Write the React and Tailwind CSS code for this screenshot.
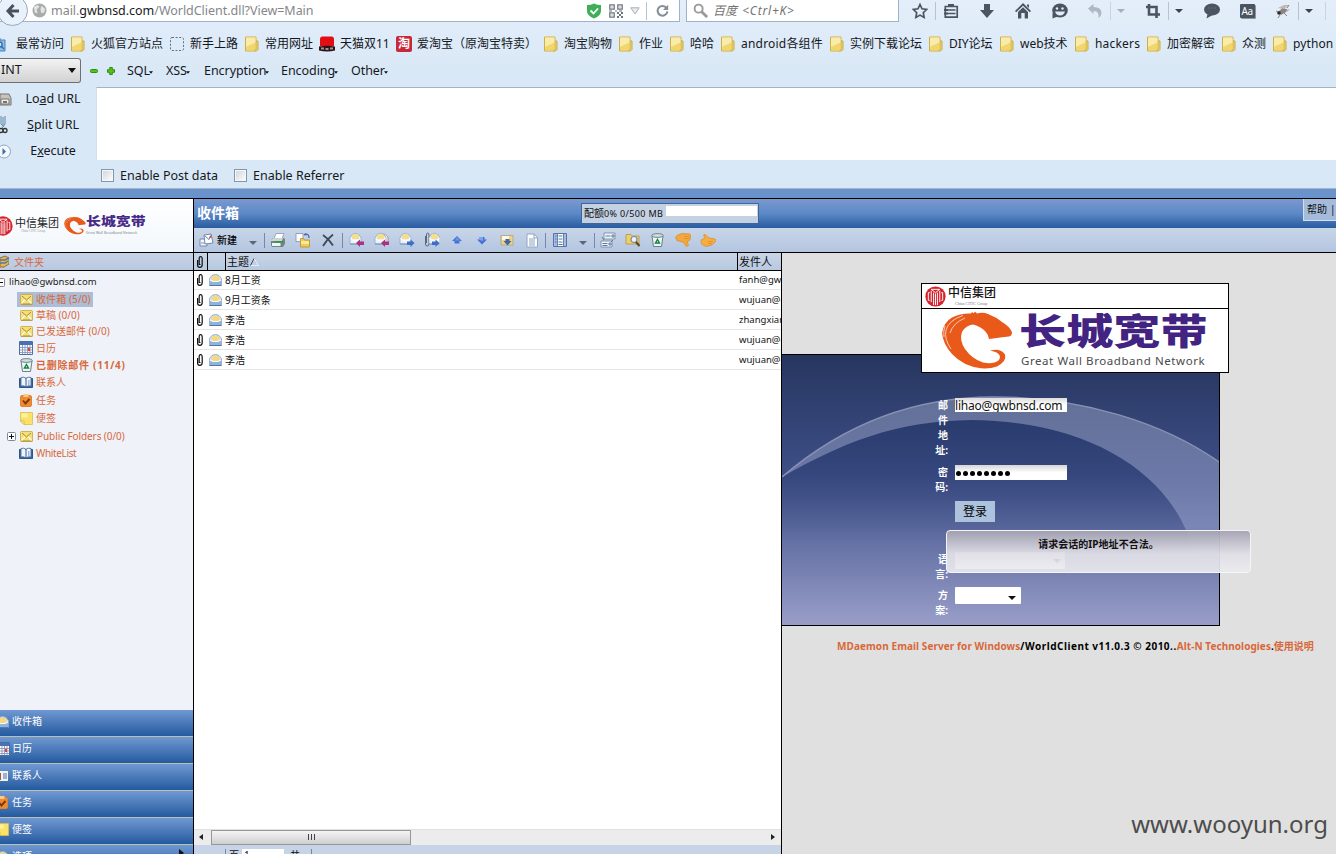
import React from "react";

const ui = "font-['Noto_Sans','Noto_Sans_CJK_SC',sans-serif]";

const Svg = ({ w = 16, h = 16, vb = "0 0 16 16", children, className = "" }) => (
  <svg width={w} height={h} viewBox={vb} fill="none" className={"block shrink-0 " + className}>
    {children}
  </svg>
);

/* ---------- browser icons ---------- */
const Folder = () => (
  <Svg w={14} h={16} vb="0 0 14 16">
    <path d="M10 5h3v8.500l-1.500 1.500H9z" fill="#efd572" stroke="#c9a947" />
    <path d="M.5 1h10.500v12l-1 2H.5z" fill="#f3df85" stroke="#cfae4c" />
    <path d="M1 1.500h9.500v5L1 11z" fill="#f9ecaa" />
    <path d="M1 11l9.500-4.500v6.500l-1 1.500H1z" fill="#f0d66c" />
  </Svg>
);
const Dashed = () => (
  <Svg w={14} h={14} vb="0 0 14 14">
    <rect x=".5" y=".5" width="13" height="13" rx="1.500" stroke="#5f7082" strokeDasharray="2 1.600" />
  </Svg>
);
const Tmall = () => (
  <Svg>
    <path d="M1 3q0-2.500 2-2.500h10q2 0 2 2.500v7H1z" fill="#e30d14" />
    <path d="M0 10.500q8-1.500 16 0v4q-8 2-16 0z" fill="#2a1414" />
    <path d="M2 11.500h3v2H2zM6.500 12h3v2h-3zM11 11.500h3v2h-3z" fill="#a39292" />
  </Svg>
);
const Visited = () => (
  <Svg w={10} h={15} vb="0 0 10 15">
    <path d="M0 1h4v2h5v11H0z" fill="#8dbce4" stroke="#4784bb" />
    <circle cx="3.500" cy="7.500" r="2.600" stroke="#2e6ea8" strokeWidth="1.400" fill="#cfe3f4" />
    <path d="M5.500 9.500L8 12" stroke="#2e6ea8" strokeWidth="1.400" />
  </Svg>
);
const Taobao = () => (
  <span className="flex h-4 w-4 items-center justify-center rounded-[2px] bg-[#c9283a] text-[12px] leading-none font-bold text-white">淘</span>
);
const Caret = ({ c = "#3b4350" }) => (
  <Svg w={8} h={4} vb="0 0 8 4"><path d="M0 0h8L4 4z" fill={c} /></Svg>
);
const Sep = ({ className = "" }) => <i className={"block h-[18px] w-px shrink-0 bg-[#b4c3d4] " + className} />;
const G = "#4b5562";
const NavIcons = {
  star: <Svg><path d="M8 1.500l2 4.300 4.700.6-3.400 3.300.8 4.700L8 12.100l-4.100 2.300.8-4.700L1.300 6.400 6 5.800z" stroke={G} strokeWidth="1.700" /></Svg>,
  list: <Svg><path d="M2.300 3.500h11.900v10.700H2.300z" stroke={G} strokeWidth="1.700" /><path d="M5 3V1h6v2z" fill={G} /><path d="M4 7h8.500M4 10.500h8.500" stroke={G} strokeWidth="1.500" /><path d="M1 6h4v2H1zM1 9.500h4v2H1z" fill={G} /></Svg>,
  down: <Svg><path d="M5 1h6v6h4l-7 8-7-8h4z" fill={G} /></Svg>,
  home: <Svg><path d="M8 0l8 8-1.200 1.200L8 2.700 1.200 9.200 0 8zM3 9l5-4.700L13 9v6.500H9.700V10H6.300v5.500H3zM12 1.500h2V5l-2-2z" fill={G} /></Svg>,
  smile: <Svg w={17}><ellipse cx="8.500" cy="7.500" rx="7.800" ry="7" fill={G} /><path d="M1 10v5.500l5-2z" fill={G} /><circle cx="5.500" cy="5.500" r="1.200" fill="#e3edf8" /><circle cx="11" cy="5.500" r="1.200" fill="#e3edf8" /><path d="M3.500 8.500h10q-1.300 4-5 4t-5-4z" fill="#e3edf8" /></Svg>,
  undo: <Svg><path d="M1 5.500L6.500 1v3q8 0 8 6 0 3-3 5 1-7-5-7v3z" fill="#adb8c4" /></Svg>,
  crop: <Svg><path d="M4 1v10.500h11M1 4h10.500v11" stroke={G} strokeWidth="2.600" /></Svg>,
  bubble: <Svg w={17}><ellipse cx="8.500" cy="6.500" rx="8" ry="6" fill={G} /><path d="M4 11l-1 4.500L9 12z" fill={G} /><path d="M5 5h1M8 5h1M11 5h1" stroke="#7c8793" /></Svg>,
  bug: <Svg><path d="M3 5l6-3 5 0-5 4zM9 7l6-1-3 3z" fill="#b1aba5" opacity=".8" /><path d="M3 9l4-3.500 5 .5-1 3-5 3z" fill="#8b837d" /><path d="M1 8l4 2M5 12l-2 3M9 10l3 3M12 5l2-3" stroke="#6b6560" strokeWidth=".8" /><circle cx="4" cy="10" r="1.800" fill="#2d2a28" /></Svg>,
};

/* ---------- mail icons ---------- */
const Env = () => (
  <Svg w={13} h={11} vb="0 0 13 11">
    <rect x=".5" y=".5" width="12" height="10" rx="1" fill="#f3df7c" stroke="#c8a63a" strokeWidth=".8" />
    <path d="M1 10h11.500" stroke="#a98a35" />
    <path d="M1.500 9.500l3.500-4M11.500 9.500L8 5.500" stroke="#fffbe0" strokeWidth="1.200" />
    <path d="M2 2l4.500 4L11 2" stroke="#a8892c" strokeWidth="1" />
  </Svg>
);
const Cal = () => (
  <Svg w={14} h={14} vb="0 0 14 14">
    <path d="M.5.500h13v13H.5z" fill="#fff" stroke="#4f6da5" /><path d="M1 1h12v3H1z" fill="#4772b8" />
    <path d="M1 6.500h12M1 9h12M1 11.500h12M3.500 4v9M6 4v9M8.500 4v9M11 4v9" stroke="#8797b9" strokeWidth=".9" /><path d="M9 7h2v3H9z" fill="#dd4433" />
  </Svg>
);
const Bin = () => (
  <Svg w={13} h={14} vb="0 0 13 14">
    <path d="M1 3h11l-1.500 10.500h-8z" fill="#edf4f4" stroke="#6c8088" /><ellipse cx="6.500" cy="2.500" rx="5.800" ry="1.900" fill="#cfdcdf" stroke="#6c8088" />
    <path d="M6.500 6.500l2 3.500h-4z" stroke="#168244" strokeWidth="1.400" />
  </Svg>
);
const Book = () => (
  <Svg w={14} h={13} vb="0 0 14 13">
    <path d="M.5 2.500h13v9h-13z" fill="#3f6dab" stroke="#2e548b" />
    <path d="M2 1.500q3-1 5 .8 2-1.800 5-.8V10q-3-.8-5 1-2-1.800-5-1z" fill="#eef5fd" stroke="#42628f" strokeWidth=".8" /><path d="M7 2v9" stroke="#365b93" /><path d="M9 4h1.500v5H9z" fill="#9ebbe0" />
  </Svg>
);
const Task = () => (
  <Svg w={12} h={13} vb="0 0 12 13">
    <rect x=".5" y="1.500" width="11" height="11" rx="1.500" fill="#ee8b30" stroke="#dc8434" /><path d="M3.500 0h5v3h-5z" fill="#f9ca86" /><path d="M3 6.500l2.500 3L9.500 5" stroke="#83340c" strokeWidth="1.900" />
  </Svg>
);
const Note = () => (
  <Svg w={13} h={13} vb="0 0 13 13"><path d="M.5.500h12v12H4L.5 9z" fill="#fbe266" stroke="#dcbd4c" strokeWidth=".8" /><path d="M.5 9H4v3.500z" fill="#fffbd8" stroke="#d0ac36" strokeWidth=".7" /><path d="M1.500 1.500h6v4h-6z" fill="#fdf0a0" /></Svg>
);
const Opened = ({ w = 13, h = 12 }) => (
  <Svg w={w} h={h} vb="0 0 13 12">
    <path d="M.5 4.500L3 1.500Q6.500-.8 10 1.500L12.500 4.500v7H.5z" fill="#cfdff0" stroke="#8ca3c0" strokeWidth=".8" />
    <path d="M2.500 3q4-3 8 0v4h-8z" fill="#f5d97e" /><path d="M1 11V6.500l3 1h5l3-1V11z" fill="#8fb3df" /><path d="M1 6l3 1.500h5L12 6" stroke="#f7fbff" strokeWidth="1.200" /><path d="M.5 11.500h12" stroke="#5478a8" />
  </Svg>
);
const Clip = ({ className = "" }) => (
  <Svg w={6} h={12} vb="0 0 6 12" className={className}><path d="M.6 4V9q0 2.300 2.200 2.300T5.200 9V3Q5.200.7 3.600.7T2.200 3v5.500h1.300" stroke="#111" strokeWidth="1.200" /></Svg>
);
const Arrow = ({ left, c }) => left ? <path d="M7 11l4-3.500v2h4v3.500h-4v2z" fill={c} /> : <path d="M15.500 11l-4-3.500v2H8v3.500h3.500v2z" fill={c} />;
const Mail = ({ two, clip, left, c }) => (
  <Svg>
    {two && <path d="M4 4q5-5 10 1v6H4z" fill="#fdeec4" stroke="#9a8aa0" strokeWidth=".8" />}
    {clip ? <path d="M1.500 4v8q0 2 1.800 2T5 12V3Q5 1 3.700 1T2.500 3v8" stroke="#5b6878" /> : null}
    <g transform={clip ? "translate(4 0)" : ""}><path d="M1 6l2-3.500q3-2.500 7 0L12 6v6H1z" fill="#eaf1fa" stroke="#93a7c3" strokeWidth=".8" /><path d="M3 3q3-2 7 0v4H3z" fill="#f8dc86" /><path d="M1.500 6.500L5 9h3l3.500-2.500" stroke="#fff" /><path d="M1 12h10" stroke="#7892b8" /></g>
    <Arrow left={left} c={c} />
  </Svg>
);
const ToolIcons = {
  create: <Svg><path d="M1 7h7v7H1z" fill="#f5f8fc" stroke="#7288aa" /><path d="M5 3l7-1 2 9-8 1z" fill="#fff" stroke="#7288aa" /><path d="M5.500 3.500l4.500 4 2.500-5" stroke="#6d84a9" /><path d="M10.500 4h2v2h-2z" fill="#d9534a" /><path d="M2 11h4" stroke="#7a91b5" /></Svg>,
  print: <Svg><path d="M6 1.500h8L12 7H4z" fill="#fff" stroke="#8799ab" strokeWidth=".8" /><path d="M1 7.500L3 6h11l1 1.500v4L13 15H2l-1-2z" fill="#70867e" /><path d="M1 7.500L3.500 6H13l-1 3H1z" fill="#c9d5d8" /><path d="M2 11h8.500v3H2z" fill="#eff4f6" /><path d="M5 9.800h8" stroke="#2f9848" strokeWidth="1.500" /></Svg>,
  move: <Svg><path d="M1 1.500h7v8H1z" fill="#fdfdfd" stroke="#8292a8" strokeWidth=".8" /><path d="M9 3l2-1.500M11 1.500v2M11 2q3 0 3 4" stroke="#3c65a6" strokeWidth="1.200" /><path d="M5.500 6.500h3l1 1.500h5v7h-9z" fill="#f2cc4d" stroke="#b4912e" strokeWidth=".8" /><path d="M6 9h8v3H6z" fill="#fae99a" /></Svg>,
  del: <Svg><path d="M3 3q6 4 10 10.500M13 2.500Q7 7 3 14" stroke="#3f4a59" strokeWidth="1.800" /></Svg>,
  reply: <Mail left c="#a93282" />,
  replyAll: <Mail two left c="#a93282" />,
  forward: <Mail c="#3e6fc4" />,
  attach: <Mail clip c="#3e6fc4" />,
  up: <Svg><path d="M8 4l5 5h-2.500v2.500h-5V9H3z" fill="#4572d6" /><path d="M8 5l3 3.500H6z" fill="#7095e4" /></Svg>,
  down: <Svg><path d="M8 12.500L13 7.500h-2.500V5h-5v2.500H3z" fill="#4572d6" /><path d="M5.500 5h3.500v4l-5-1.500h1.500z" fill="#7fa4ee" /></Svg>,
  save: <Svg><path d="M2 3.500h12v9.500H2z" fill="#ecd480" stroke="#a9a186" strokeWidth=".8" /><path d="M3 4h7v4H3z" fill="#fdf8df" /><path d="M6.500 7h4v2h2l-4 4.500-4-4.500h2z" fill="#4467a4" /></Svg>,
  doc: <Svg><path d="M3 2h7l3.500 3.500V15H3z" fill="#fdfeff" stroke="#93a5c0" /><path d="M10 2v4h3.500M5 7h6M5 9h6M5 11h6M5 13h6" stroke="#8fa3c0" /></Svg>,
  cols: <Svg><path d="M1.500 1.500h13v13h-13z" fill="#fff" stroke="#5874a3" /><path d="M2 2h3v12H2zM12 2h2v12h-2z" fill="#a5bbdd" /><path d="M6.500 4h4M6.500 7h4M6.500 10h4M6.500 12.500h4M3 4h1.500M3 7h1.500M3 10h1.500" stroke="#5874a3" /><path d="M5.500 2v12M11.500 2v12" stroke="#5f83bd" /></Svg>,
  sort: <Svg><path d="M4 1h11v6H4zM1 9h11v6H1z" fill="#eef4fb" stroke="#7c8ca6" strokeWidth=".9" /><path d="M5.500 4h5M12 3h2v2h-2zM2.500 11.500h5M9 11h2v2H9zM2.500 13.500h5" stroke="#64789a" /><path d="M2 5l2 3M13 8l-2 2" stroke="#64789a" /></Svg>,
  search: <Svg><path d="M1 2.500h5l1 1.500h7V12H1z" fill="#f0cf67" stroke="#b49a53" strokeWidth=".9" /><circle cx="9" cy="7.500" r="3" fill="#e7f3ff" stroke="#7d8a99" strokeWidth="1.200" /><path d="M11 10l3.500 4" stroke="#5a442d" strokeWidth="2" /></Svg>,
  bin: <Bin />,
  bad: <Svg><path d="M.5 5L3 3l4-1.500 8 .5q1.500 3.500-.5 6.500L12 9.500l1.500 4-2 1L8 10 2 8.500z" fill="#f3a83a" stroke="#d58f34" strokeWidth=".8" /><path d="M9 4.500h5M9 6.500h5" stroke="#d8892a" strokeWidth=".7" /></Svg>,
  good: <Svg><path d="M1 8l4-2L3.500 3 5 2.500 9 6l6 1q1.500 1 .5 2.500L12 13l-6 1.500L1.500 12z" fill="#f5ae3f" stroke="#d58f34" strokeWidth=".8" /><path d="M8 9.500h5M8 11.500h4" stroke="#d8892a" strokeWidth=".7" /></Svg>,
};

const bookmarks = [
  ["w-[20px]", "w-[55px]", <Visited />, "最常访问", "-ml-1"],
  ["w-[20px]", "w-[79px]", <Folder />, "火狐官方站点"],
  ["w-[20px]", "w-[55px]", <Dashed />, "新手上路"],
  ["w-[20px]", "w-[54px]", <Folder />, "常用网址"],
  ["w-[21px]", "w-[56px]", <Tmall />, "天猫双11"],
  ["w-[21px]", "w-[127px]", <Taobao />, "爱淘宝（原淘宝特卖）"],
  ["w-[20px]", "w-[55px]", <Folder />, "淘宝购物"],
  ["w-[20px]", "w-[31px]", <Folder />, "作业"],
  ["w-[20px]", "w-[31px]", <Folder />, "哈哈"],
  ["w-[20px]", "w-[89px]", <Folder />, "android各组件", "tracking-[0.2px]"],
  ["w-[20px]", "w-[79px]", <Folder />, "实例下载论坛"],
  ["w-[20px]", "w-[51px]", <Folder />, "DIY论坛"],
  ["w-[20px]", "w-[55px]", <Folder />, "web技术"],
  ["w-[20px]", "w-[52px]", <Folder />, "hackers", "tracking-[0.2px]"],
  ["w-[20px]", "w-[55px]", <Folder />, "加密解密"],
  ["w-[20px]", "w-[31px]", <Folder />, "众测"],
  ["w-[20px]", "w-[44px]", <Folder />, "python", "tracking-[0.1px]"],
];

const Cell = ({ w = "w-[36px]", children }) => <div className={w + " flex shrink-0 items-center justify-center"}>{children}</div>;

function NavBar() {
  return (
    <div className="flex h-[34px] items-start">
      <div className="relative flex h-[22px] w-[680px] items-center border-r border-b border-[#9db2cb] bg-white">
        <div className="absolute -top-[5px] -left-[3px] flex h-[31px] w-[31px] items-center justify-center rounded-full border border-[#93a9c4] bg-[#e9f1fa]">
          <Svg><path d="M8.500 2L3 8l5.500 6M3.500 8H14" stroke="#47525f" strokeWidth="3" /></Svg>
        </div>
        <Svg w={15} h={15} className="ml-8"><circle cx="8" cy="8" r="7.500" fill="#a9aaab" /><path d="M2 4l4-2 2 2-3 3 1 4-3-1zM10 3l4 3-1 4-3 1-1-4z" fill="#e4e4e4" /></Svg>
        <div className="ml-[4px] w-[536px] text-[12.5px] leading-[20px] tracking-[-0.03px] text-[#83878b]">
          mail.<span className="text-[#16191d]">gwbnsd.com</span>/WorldClient.dll?View=Main
        </div>
        <Svg w={14} h={16} vb="0 0 14 16"><path d="M0 2q4 0 7-1.500Q10 2 14 2v6q0 5-7 7.500Q0 13 0 8z" fill="#3fae58" /><path d="M3.500 7.500l3 3 4.500-5" stroke="#fff" strokeWidth="1.800" /></Svg>
        <Svg w={14} h={14} vb="0 0 14 14" className="ml-[8px]">
          <path d="M.8.800h4.400v4.400H.8zM8.800.800h4.400v4.400H8.800zM.8 8.800h4.400v4.400H.8z" stroke="#6d757e" strokeWidth="1.300" />
          <path d="M2.500 2.500h1v1h-1zM10.500 2.500h1v1h-1zM2.500 10.500h1v1h-1zM8 8h2v2H8zM12 8h2v2h-2zM10 10h2v2h-2zM8 12h2v2H8zM12 12h2v2h-2zM6 6.500h2v1H6zM10 6.500h3v1h-3zM0 6.500h3v1H0z" fill="#6d757e" />
        </Svg>
        <Svg w={10} h={8} vb="0 0 10 8" className="ml-[7px]"><path d="M.8.800h8.400L5 7z" stroke="#a8afb7" fill="#e9ebee" /></Svg>
        <Sep className="ml-[6px]" />
        <Svg w={13} h={13} className="ml-[9px]"><path d="M13 5A6 6 0 1 0 14 9" stroke="#848e99" strokeWidth="2.500" /><path d="M15 1v6.500H8.500z" fill="#848e99" /></Svg>
      </div>
      <div className="ml-[6px] flex h-[22px] w-[213px] items-center border-x border-b border-[#9db2cb] bg-white">
        <Svg w={15} h={15} className="ml-[6px]"><circle cx="6" cy="6" r="4.300" stroke="#9a9a9a" strokeWidth="2" /><path d="M9 9l6 6" stroke="#9a9a9a" strokeWidth="3" /></Svg>
        <span className="ml-[5px] text-[12px] leading-[20px] text-[#737373] italic [word-spacing:2px]">百度 <span className="tracking-[0.8px]">&lt;Ctrl+K&gt;</span></span>
      </div>
      <div className="ml-[6px] flex h-[21px] items-center">
        <Cell w="w-[30px]">{NavIcons.star}</Cell><Sep />
        <Cell w="w-[30px]">{NavIcons.list}</Cell>
        <Cell w="w-[42px]">{NavIcons.down}</Cell>
        <Cell w="w-[30px]">{NavIcons.home}</Cell>
        <Cell w="w-[42px]">{NavIcons.smile}</Cell>
        <Cell w="w-[30px]">{NavIcons.undo}</Cell><Sep className="opacity-60" />
        <Cell w="w-[20px]"><Caret c="#a7b1bd" /></Cell>
        <Cell w="w-[37px]"><span className="ml-[7px]">{NavIcons.crop}</span></Cell>
        <Sep />
        <Cell w="w-[20px]"><Caret /></Cell>
        <Cell w="w-[44px]">{NavIcons.bubble}</Cell>
        <Cell w="w-[28px]"><div className="flex h-[14px] w-[15px] items-center justify-center rounded-[1px] bg-[#4b5562] text-[10px] leading-none tracking-[-0.5px] text-white shadow-[1px_1px_0_#8b96a3]">Aa</div></Cell>
        <Cell w="w-[37px]"><span className="ml-[7px]">{NavIcons.bug}</span></Cell>
        <Sep />
        <Cell w="w-[20px]"><Caret /></Cell>
        <Sep className="ml-[6px] opacity-60" />
      </div>
    </div>
  );
}

function Bookmarks() {
  return (
    <div className="flex h-[20px] items-center overflow-hidden whitespace-nowrap">
      {bookmarks.map(([iw, tw, icon, label, cls], i) => (
        <div key={i} className={"flex shrink-0 items-center " + (i === 0 ? cls : "")}>
          <span className={iw + " shrink-0"}>{icon}</span>
          <span className={tw + " shrink-0 text-[12px] leading-[20px] text-[#15181c] " + (i ? cls || "" : "")}>{label}</span>
        </div>
      ))}
    </div>
  );
}

const Menu = ({ w, children }) => (
  <div className={w + " flex items-center text-[12.5px] tracking-[-0.05px]"}>{children}<Svg w={4} h={3} vb="0 0 5 3" className="-ml-px mt-[1px]"><path d="M0 0h5L2.500 3z" fill="#111" /></Svg></div>
);

function HackBar() {
  return (
    <div className="text-[12.5px] text-[#15181c]">
      <div className="mt-[4px] flex h-[25px] items-center">
        <div className="flex h-[25px] w-[81px] items-center justify-between rounded-r-[3px] border border-l-0 border-[#707070] bg-linear-to-b from-[#f3f3f3] to-[#d2d2d2] pr-[4px] pl-px">
          INT<Svg w={8} h={5} vb="0 0 8 5"><path d="M0 0h8L4 5z" fill="#111" /></Svg>
        </div>
        <Svg w={8} h={4} vb="0 0 8 4" className="ml-[9px]"><rect x=".5" y=".5" width="7" height="3" rx="1" fill="#55c31c" stroke="#2f8a12" /></Svg>
        <Svg w={8} h={8} vb="0 0 8 8" className="ml-[9px]"><path d="M2.700.500h2.600v2.200h2.200v2.600H5.300v2.200H2.700V5.300H.5V2.700h2.200z" fill="#55c31c" stroke="#2f8a12" /></Svg>
        <div className="ml-[12px] flex pt-[2px]">
          <Menu w="w-[39px]">SQL</Menu><Menu w="w-[38px]">XSS</Menu><Menu w="w-[77px]">Encryption</Menu><Menu w="w-[70px]">Encoding</Menu><Menu w="w-[60px]">Other</Menu>
        </div>
      </div>
      <div className="mt-[4px] flex">
        <div className="-mt-px w-[96px]">
          {[
            [<Svg w={12} h={13} vb="0 0 12 13"><path d="M0 1h9l2 4v7H0z" fill="#c6c3bd" stroke="#77746f" /><path d="M1 6h8v5H1z" fill="#efede9" stroke="#77746f" /><path d="M3 8h4v2H3z" fill="#77746f" /></Svg>, <>Lo<u>a</u>d URL</>],
            [<Svg w={12} h={18} vb="0 0 12 18"><path d="M1 0v8l3 3M5 0v8l-3 4M3 1v8" stroke="#5e88a4" /><circle cx="1" cy="14.500" r="2" stroke="#333" strokeWidth="1.300" /><circle cx="5" cy="14.500" r="2" stroke="#333" strokeWidth="1.300" /></Svg>, <><u>S</u>plit URL</>],
            [<Svg w={12} h={15} vb="0 0 12 15"><circle cx="4" cy="7.500" r="6.500" fill="#f3f8fd" stroke="#8ca6c5" /><path d="M2.500 4l3.500 3.500L2.500 11z" fill="#3f6ea8" /></Svg>, <>E<u>x</u>ecute</>],
          ].map(([ic, t], i) => (
            <div key={i} className="flex h-[26px] items-center"><span className="w-[12px]">{ic}</span><span className="w-[82px] text-center leading-[18px] tracking-[-0.05px]">{t}</span></div>
          ))}
        </div>
        <div className="h-[73px] flex-1 border-t border-l border-[#a3b3c6] border-l-[#d4dfeb] bg-white" />
      </div>
      <div className="-mt-[4px] flex h-[28px] items-center pt-[3px] pl-[101px]">
        <i className="mr-[6px] block h-[13px] w-[13px] border border-[#8596ab] bg-linear-to-br from-[#cfd3d8] to-white shadow-[inset_0_0_0_1px_#f5f7fa]" />
        <span className="w-[114px] leading-[18px]">Enable Post data</span>
        <i className="mr-[6px] block h-[13px] w-[13px] border border-[#8596ab] bg-linear-to-br from-[#cfd3d8] to-white shadow-[inset_0_0_0_1px_#f5f7fa]" />
        <span className="leading-[18px]">Enable Referrer</span>
      </div>
    </div>
  );
}

/* ---------- logos ---------- */
const Citic = ({ s }) => (
  <Svg w={s} h={s} vb="0 0 22 22">
    <circle cx="11" cy="11" r="10.600" fill="#d5222c" />
    <path d="M6.500 5v12M9 7v13M13 7v13M15.500 5v12M11 8v12M5 7H3.500v8H5M17 7h1.500v8H17M6.500 3.500h9L11 7z" stroke="#fff" strokeWidth="1" />
  </Svg>
);
const Horse = ({ w, h }) => (
  <Svg w={w} h={h} vb="0 0 74 58">
    <path d="M36 .7L38 2.500Q44 1 49 3Q57 6 63 11Q70 15 73 21Q73 25 70 25.500Q63 26 56 27.300L50 28Q49 23 46 20Q41 15 34 13.500Q27 14 23 21Q20 29 26 38Q33 48 44 51.500Q54 54 60 49Q64 42 51 39.500Q62 37 66 43.500Q68 50 58 55.500Q51 58 42 57.300Q24 55 13 43Q4 33 3 22Q5 11 13 6.500Q22 2 32 2.500L33 1L34.500 2.200z" fill="#e8591a" />
    <path d="M24 4.500Q10 9 7 19Q5 28 12 38M26 7Q14 12 11 22M6 15Q4 20 5 26" stroke="#fff" strokeWidth=".9" opacity=".75" />
  </Svg>
);

const tree = [
  ["h-[16px]", <Env />, "收件箱 (5/0)", "sel"],
  ["h-[16px]", <Env />, "草稿 (0/0)"],
  ["h-[16px]", <Env />, "已发送邮件 (0/0)"],
  ["h-[18px]", <Cal />, "日历"],
  ["h-[16px]", <Bin />, "已删除邮件 (11/4)", "bold"],
  ["h-[18px]", <Book />, "联系人"],
  ["h-[18px]", <Task />, "任务"],
  ["h-[18px]", <Note />, "便签"],
  ["h-[18px]", <Env />, "Public Folders (0/0)", "plus"],
  ["h-[16px]", <Book />, "WhiteList", "tight"],
];

const Card = () => <Svg w={13} h={12} vb="0 0 13 12"><path d="M0 1h12v10H0z" fill="#eef3fa" /><path d="M0 3h5v7H0z" fill="#a65a36" /><path d="M7 4h4M7 6h4M7 8h4" stroke="#5070a5" /></Svg>;
const shortcuts = [[<Opened />, "收件箱"], [<Cal />, "日历"], [<Card />, "联系人"], [<Task />, "任务"], [<Note />, "便签"], [<Opened />, "选项"]];

const PlusBox = ({ plus }) => (
  <Svg w={9} h={9} vb="0 0 9 9"><rect x=".5" y=".5" width="8" height="8" rx="1" fill="#fff" stroke="#7f8896" /><path d="M2 4.500h5" stroke="#111" />{plus && <path d="M4.500 2v5" stroke="#111" />}</Svg>
);

const labelStyle = { bold: "font-bold tracking-[0.75px]", tight: "tracking-[-0.35px]", plus: "pl-[1px] tracking-[-0.08px]", sel: "tracking-[0.1px]" };

function Sidebar() {
  return (
    <aside className="flex w-[194px] shrink-0 flex-col border-r border-black bg-[#eff3f9]">
      <div className="flex h-[54px] items-center overflow-hidden border-b border-black bg-linear-to-b from-white to-[#f2f7fc] whitespace-nowrap">
        <div className="-ml-[7px]"><Citic s={20} /></div>
        <div className="ml-[2px] w-[47px] font-['Liberation_Serif','Noto_Sans_CJK_SC',serif] leading-none text-[#26272b]">
          <div className="text-[11px] leading-[12px]">中信集团</div>
          <div className="pl-[6px] text-[3px] leading-[5px] text-[#999]">China CITIC Group</div>
        </div>
        <div className="ml-[1px]"><Horse w={23} h={19} /></div>
        <div className="w-[60px]">
          <div className="origin-left scale-x-[1.24] text-[12px] leading-[12px] font-black text-[#482a86]">长城宽带</div>
          <div className="pt-[2px] text-[3.500px] leading-[5px] text-[#888]">Great Wall Broadband Network</div>
        </div>
      </div>
      <div className="flex h-[18px] items-center border-b border-black bg-linear-to-b from-[#c6d3e6] to-[#b9c9e1] text-[10px] text-[#d8683a]">
        <Svg w={9} h={13} vb="0 0 9 13"><path d="M0 3l5-2 4 2v6l-5 3H0z" fill="#e9b54c" stroke="#8d713a" /><path d="M0 5h5l4-2M0 8h5l3-2" stroke="#5478ad" strokeWidth="1.400" /></Svg>
        <span className="ml-[5px] leading-none">文件夹</span>
      </div>
      <div className="flex-1 pt-[2px] text-[10px] whitespace-nowrap text-[#d8683a]">
        <div className="flex h-[18px] items-center text-[#1b1d20]"><span className="-ml-[4px]"><PlusBox /></span><span className="ml-[4px] text-[9.500px]">lihao@gwbnsd.com</span></div>
        {tree.map(([h, icon, label, mod], i) => (
          <div key={i} className={h + " flex items-center"}>
            <span className="w-[17px] pl-[7px]">{mod === "plus" && <PlusBox plus />}</span>
            <div className={"flex h-[15px] items-center pr-[2px] " + (mod === "sel" ? "bg-[#adbdd6]" : "")}>
              <span className="flex w-[19px] justify-center pr-[1px]">{icon}</span>
              <span className={"leading-[15px] " + (labelStyle[mod] || "")}>{label}</span>
            </div>
          </div>
        ))}
      </div>
      <div className="h-[144px] shrink-0 overflow-hidden">
        {shortcuts.map(([icon, label], i) => (
          <div key={i} className="flex h-[27px] items-center border-b border-[#b9c0b4] bg-linear-to-b from-[#7099d2] to-[#235a9f] pb-[3px] text-[10px] text-white">
            <span className="-ml-[4px] w-[16px]">{icon}</span><span className="flex-1 leading-[15px]">{label}</span>
            {i === 5 && <Svg w={5} h={8} vb="0 0 5 8" className="mr-[9px] -mt-[8px]"><path d="M0 0l5 4-5 4z" fill="#111" /></Svg>}
          </div>
        ))}
      </div>
    </aside>
  );
}

const TSep = ({ className = "" }) => <i className={"block h-[15px] w-px shrink-0 bg-[#7688a5] " + className} />;
const T = ({ n, w = "w-[25px]" }) => <Cell w={w}>{ToolIcons[n]}</Cell>;

function Header() {
  return (
    <>
      <div className="flex h-[29px] bg-linear-to-b from-[#7a99cf] via-[#5c89c7] to-[#285b9f]">
        <div className="w-[387px] pl-[3px] text-[14px] leading-[28px] font-bold text-white">收件箱</div>
        <div className="mt-[4px] flex h-[21px] w-[178px] border border-[#40659a] bg-[#c3d1e3] pl-[2px] text-[9px] leading-[18px] whitespace-nowrap text-[#111]">
          <span className="w-[82px] tracking-[0.35px]"><span className="text-[10px] tracking-normal">配额</span>0% 0/500 MB</span>
          <i className="mt-[2px] block h-[10px] w-[91px] bg-white" />
        </div>
        <div className="ml-auto flex h-[22px] w-[33px] items-center border-b border-l border-[#d3e0f1] bg-[#a5bbdb] pl-[3px] text-[10px] whitespace-nowrap text-[#111]">帮助<span className="ml-[3px]">|</span></div>
      </div>
      <div className="flex h-[25px] items-center border-b border-black bg-linear-to-b from-[#c9d6e8] to-[#b3c5e0]">
        <div className="flex w-[47px] items-center pl-[5px] text-[10px] font-medium text-black">{ToolIcons.create}<span className="ml-[2px]">新建</span></div>
        <Cell w="w-[23px]"><span className="mt-[6px]"><Caret c="#5b6878" /></span></Cell><TSep />
        <T n="print" /><T n="move" /><T n="del" /><TSep className="mx-[1.500px]" />
        <T n="reply" /><T n="replyAll" /><T n="forward" /><T n="attach" /><T n="up" /><T n="down" /><T n="save" /><T n="doc" /><TSep className="ml-[1px]" />
        <T n="cols" w="w-[28px]" /><Cell w="w-[18px]"><span className="mt-[6px]"><Caret c="#5b6878" /></span></Cell><TSep className="ml-[2px]" />
        <T n="sort" /><T n="search" /><T n="bin" /><T n="bad" /><T n="good" />
      </div>
    </>
  );
}

const messages = [["8月工资", "fanh@gwbnsd.com"], ["9月工资条", "wujuan@gwbnsd.com"], ["李浩", "zhangxian@gwbnsd.com"], ["李浩", "wujuan@gwbnsd.com"], ["李浩", "wujuan@gwbnsd.com"]];

function MessageList() {
  return (
    <section className="flex w-[588px] shrink-0 flex-col overflow-hidden border-r border-black bg-white text-[10px] text-[#111]">
      <div className="flex h-[18px] shrink-0 border-b border-black bg-linear-to-b from-[#c9d6e6] to-[#b7c8e0] text-[11px] leading-[17px]">
        <div className="flex w-[14px] items-center border-r border-black pl-[3px]"><Clip /></div>
        <div className="w-[18px] border-r border-black" />
        <div className="flex w-[512px] items-center border-r border-black pl-[1px]">主题<Svg w={9} h={8} vb="0 0 9 8" className="ml-[1px]"><path d="M4 .5L8.500 7.500H.5" stroke="#e7eef7" /><path d="M4 .5L.5 7.500" stroke="#444" /></Svg></div>
        <div className="pl-[1px]">发件人</div>
      </div>
      {messages.map(([s, f], i) => (
        <div key={i} className={(i === 0 ? "h-[19px] " : "h-[20px] ") + "flex shrink-0 items-center border-b border-[#e6e6e6] whitespace-nowrap"}>
          <span className="w-[15px] pl-[3px]"><Clip /></span>
          <span className="w-[16px]"><Opened /></span>
          <span className="w-[514px] pt-[1px]">{s}</span>
          <span className="w-[42px] overflow-hidden pt-[1px] text-[9.500px]">{f}</span>
        </div>
      ))}
      <div className="flex-1" />
      <div className="flex h-[16px] shrink-0 items-center border-t border-[#e0e0e0] bg-[#ececec] pr-[6px] pb-px">
        <Svg w={4} h={6} vb="0 0 4 6" className="mr-[8px] ml-[5px]"><path d="M4 0v6L0 3z" fill="#222" /></Svg>
        <div className="flex h-[15px] w-[200px] items-center justify-center gap-[2px] border border-[#979797] bg-linear-to-b from-[#f4f4f4] to-[#cfcfcf]">
          <i className="h-[6px] w-px bg-[#444]" /><i className="h-[6px] w-px bg-[#444]" /><i className="h-[6px] w-px bg-[#444]" />
        </div>
        <Svg w={4} h={6} vb="0 0 4 6" className="ml-auto"><path d="M0 0v6l4-3z" fill="#222" /></Svg>
      </div>
      <div className="flex h-[9px] shrink-0 items-start overflow-hidden bg-[#c6d4e6] pt-[4px] text-[10px] leading-[12px]">
        <span className="w-[31px] pl-[5px] text-[#9cadc6]">◂◂ ◂</span><i className="h-[8px] w-px bg-[#7688a5]" />
        <span className="ml-[3px] w-[13px]">页</span>
        <span className="h-[12px] w-[42px] bg-white pl-[2px]">1</span>
        <span className="ml-[6px] w-[21px]">共</span><i className="h-[8px] w-px bg-[#7688a5]" /><span className="ml-[4px] text-[#9cadc6]">▸ ▸▸</span>
      </div>
    </section>
  );
}

const Label = ({ children }) => <span className="block w-[14px] shrink-0 text-right leading-[15px] break-all whitespace-pre-line">{children}</span>;

function Login() {
  return (
    <section className="relative flex-1 overflow-hidden bg-[#e0e0e0]">
      <div className="relative mt-[101px] h-[272px] w-[438px] border border-l-0 border-black bg-linear-to-b from-[#27365f] via-[#3e4f88] via-45% to-[#999ec8]">
        <svg className="absolute inset-0" width="437" height="270" viewBox="0 0 437 270" fill="none">
          <defs>
            <linearGradient id="band" x1="0" y1="40" x2="0" y2="215" gradientUnits="userSpaceOnUse"><stop stopColor="#8d98b9" stopOpacity=".55" /><stop offset=".75" stopColor="#9aa4cc" stopOpacity=".5" /><stop offset="1" stopColor="#9aa4cc" stopOpacity="0" /></linearGradient>
            <linearGradient id="dome" x1="0" y1="64" x2="0" y2="190" gradientUnits="userSpaceOnUse"><stop stopColor="#24376a" stopOpacity=".6" /><stop offset="1" stopColor="#24376a" stopOpacity="0" /></linearGradient>
          </defs>
          <path d="M0 122C60 88 112 66 190 65C300 66 382 112 408 185L416 215H0z" fill="url(#dome)" />
          <path d="M0 122C64 67 135 42 212 42C300 42 382 68 437 107V215H416L408 185C382 112 300 66 190 65C112 66 60 88 0 122z" fill="url(#band)" />
          <path d="M0 122C64 67 135 42 212 42C300 42 382 68 437 107" stroke="#8791b5" strokeWidth="1.500" />
        </svg>
        <div className="relative pt-[43px] pl-[152px] text-[10px] font-bold text-white">
          <div className="flex h-[67px] gap-[7px]"><Label>{"邮\n件\n地\n址:"}</Label>
            <div className="h-[14px] w-[112px] overflow-hidden bg-linear-to-b from-[#dcdcdc] to-white to-50% text-[12px] leading-[15px] font-normal tracking-[-0.2px] whitespace-nowrap text-[#111]">lihao@gwbnsd.com</div></div>
          <div className="flex h-[36px] gap-[7px]"><Label>{"密\n码:"}</Label>
            <div className="flex h-[15px] w-[112px] items-center gap-[2px] bg-linear-to-b from-[#d5d5d5] to-white to-50% pt-[2px] pl-[1px]">{Array.from({ length: 8 }, (_, i) => <i key={i} className="h-[5px] w-[5px] rounded-full bg-black" />)}</div></div>
          <div className="h-[51px] pl-[21px]"><button className="block h-[21px] w-[40px] bg-[#adc2dd] text-[12px] leading-[21px] font-normal text-black">登录</button></div>
          <div className="flex h-[36px] gap-[7px]"><Label>{"语\n言:"}</Label>
            <div className="flex h-[17px] w-[110px] items-center justify-end bg-white pr-[4px]"><Caret c="#111" /></div></div>
          <div className="flex gap-[7px]"><Label>{"方\n案:"}</Label>
            <div className="-mt-px flex h-[17px] w-[66px] items-center justify-end rounded-[1px] bg-white pt-[4px] pr-[5px]"><Caret c="#111" /></div></div>
        </div>
      </div>
      <div className="mt-[13px] pl-[55px] text-[10px] leading-[15px] font-bold whitespace-nowrap text-black">
        <span className="tracking-[0.08px] text-[#d8683a]">MDaemon Email Server for Windows</span><span className="tracking-[0.51px]">/WorldClient v11.0.3 © 2010..</span><span className="tracking-[0.06px] text-[#d8683a]">Alt-N Technologies</span>.<span className="text-[#d8683a]">使用说明</span>
      </div>
      <div className="absolute top-[30px] left-[139px] h-[90px] w-[308px] border border-black bg-white">
        <div className="flex h-[25px] items-center border-b border-black pl-[3px]">
          <Citic s={21} />
          <div className="ml-[2px] font-['Liberation_Serif','Noto_Sans_CJK_SC',serif]">
            <div className="text-[12px] leading-[15px] font-medium text-[#161616]">中信集团</div>
            <div className="pl-[7px] text-[4px] leading-[5px] text-[#777]">China CITIC Group</div>
          </div>
        </div>
        <div className="flex pt-[2px] pl-[17px]">
          <Horse w={74} h={58} />
          <div className="ml-[6px] w-[190px]">
            <div className="origin-left scale-x-[1.31] text-[36px] leading-[42px] font-black whitespace-nowrap text-[#432382]">长城宽带</div>
            <div className="ml-[2px] text-[11.500px] leading-[15px] tracking-[0.57px] whitespace-nowrap text-[#4a4a4c]">Great Wall Broadband Network</div>
          </div>
        </div>
      </div>
      <div className="absolute top-[277px] left-[164px] h-[43px] w-[305px] rounded-[4px] border border-[#f5f5f8] bg-linear-to-b from-[#a5a3b2]/95 via-[#dfdee6]/95 via-55% to-[#ececf0]/90 text-center text-[10px] leading-[27px] font-bold text-[#111]"><span className="tracking-[0.05px]">请求会话的IP地址不合法。</span></div>
      <div className="absolute right-[8px] bottom-[14px] text-[24px] leading-[32px] text-[#4d4d4d]">www.wooyun.org</div>
    </section>
  );
}

export default function App() {
  return (
    <div className={ui + " flex h-[854px] w-[1336px] flex-col overflow-hidden bg-[#dae8f6]"}>
      <div className="h-[188px] shrink-0 bg-linear-to-b from-[#e4eefa] to-[#d9e8f6] to-40%">
        <NavBar />
        <Bookmarks />
        <HackBar />
      </div>
      <div className="h-[11px] shrink-0 border-t border-b border-t-[#a3b5cc] border-b-black bg-[#6a93cc]" />
      <div className="flex min-h-0 flex-1">
        <Sidebar />
        <main className="flex min-w-0 flex-1 flex-col">
          <Header />
          <div className="flex min-h-0 flex-1"><MessageList /><Login /></div>
        </main>
      </div>
    </div>
  );
}
